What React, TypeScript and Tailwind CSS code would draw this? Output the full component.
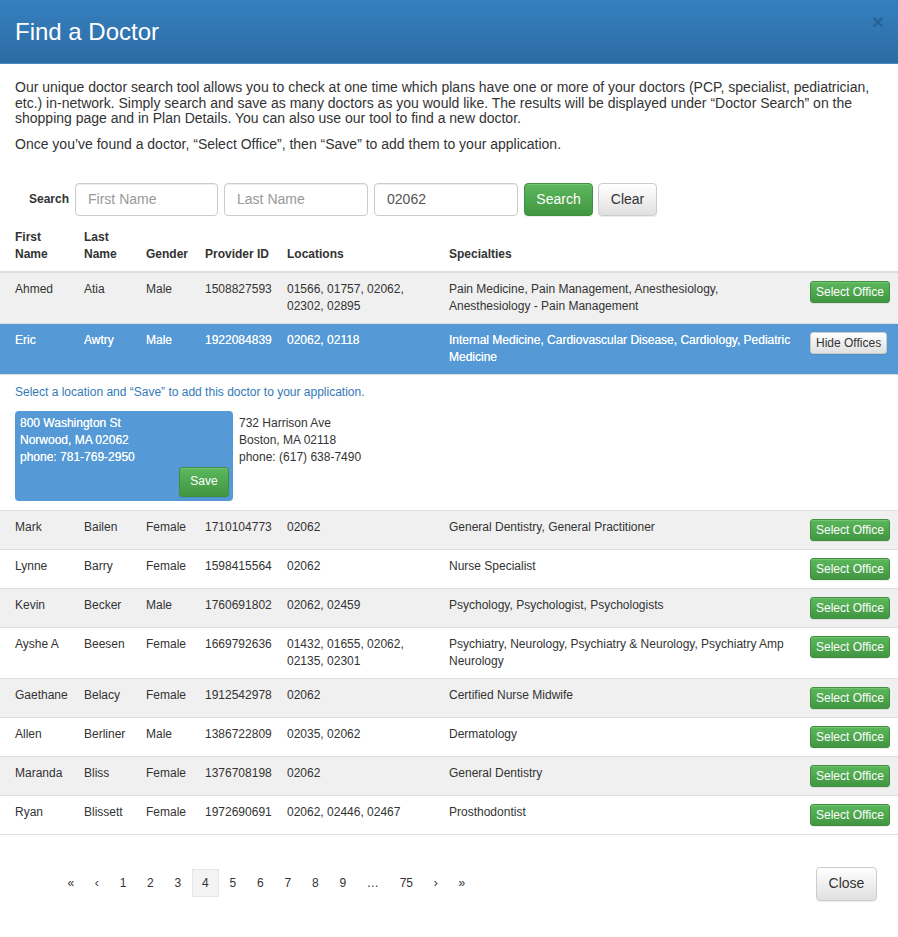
import React from "react";

type Doctor = {
  first: string;
  last: string;
  gender: string;
  id: string;
  locations: string;
  specialties: string;
  open?: boolean;
};

const doctors: Doctor[] = [
  { first: "Ahmed", last: "Atia", gender: "Male", id: "1508827593", locations: "01566, 01757, 02062, 02302, 02895", specialties: "Pain Medicine, Pain Management, Anesthesiology, Anesthesiology - Pain Management" },
  { first: "Eric", last: "Awtry", gender: "Male", id: "1922084839", locations: "02062, 02118", specialties: "Internal Medicine, Cardiovascular Disease, Cardiology, Pediatric Medicine", open: true },
  { first: "Mark", last: "Bailen", gender: "Female", id: "1710104773", locations: "02062", specialties: "General Dentistry, General Practitioner" },
  { first: "Lynne", last: "Barry", gender: "Female", id: "1598415564", locations: "02062", specialties: "Nurse Specialist" },
  { first: "Kevin", last: "Becker", gender: "Male", id: "1760691802", locations: "02062, 02459", specialties: "Psychology, Psychologist, Psychologists" },
  { first: "Ayshe A", last: "Beesen", gender: "Female", id: "1669792636", locations: "01432, 01655, 02062, 02135, 02301", specialties: "Psychiatry, Neurology, Psychiatry & Neurology, Psychiatry Amp Neurology" },
  { first: "Gaethane", last: "Belacy", gender: "Female", id: "1912542978", locations: "02062", specialties: "Certified Nurse Midwife" },
  { first: "Allen", last: "Berliner", gender: "Male", id: "1386722809", locations: "02035, 02062", specialties: "Dermatology" },
  { first: "Maranda", last: "Bliss", gender: "Female", id: "1376708198", locations: "02062", specialties: "General Dentistry" },
  { first: "Ryan", last: "Blissett", gender: "Female", id: "1972690691", locations: "02062, 02446, 02467", specialties: "Prosthodontist" },
];

const cols = "grid grid-cols-[76px_62px_59px_82px_162px_361px_96px]";
const greenBtn =
  "bg-gradient-to-b from-[#5cb85c] to-[#419641] border border-[#3e8f3e] text-white rounded-[3px] shadow-[inset_0_1px_0_rgba(255,255,255,0.15),0_1px_1px_rgba(0,0,0,0.075)]";
const whiteBtn =
  "bg-gradient-to-b from-white to-[#e0e0e0] border border-[#ccc] text-[#333] rounded-[3px] shadow-[inset_0_1px_0_rgba(255,255,255,0.15),0_1px_1px_rgba(0,0,0,0.075)]";
const inputCls =
  "h-[33px] border border-[#ccc] rounded-[4px] px-[12px] text-[14px] text-[#555] placeholder:text-[#999] shadow-[inset_0_1px_1px_rgba(0,0,0,0.075)] mr-[6px]";
// white text on blue looks heavier in the source; a faint glow gets close
const onBlue = "text-white [text-shadow:0_0_0.6px_rgba(255,255,255,0.9)]";

function Row({ d, striped }: { d: Doctor; striped: boolean }) {
  const bg = d.open ? `bg-[#559ad6] ${onBlue}` : striped ? "bg-[#f0f0f0] text-[#333]" : "bg-white text-[#333]";
  return (
    <div className={`${cols} ${bg} border-b border-[#ddd] text-[12px] leading-[17px]`}>
      <div className="pl-[15px] pr-2 py-2">{d.first}</div>
      <div className="px-2 py-2">{d.last}</div>
      <div className="px-2 py-2">{d.gender}</div>
      <div className="px-2 py-2">{d.id}</div>
      <div className="px-2 py-2">{d.locations}</div>
      <div className="px-2 py-2">{d.specialties}</div>
      <div className="px-2 py-2">
        {d.open ? (
          <button className={`${whiteBtn} [text-shadow:none] h-[22px] px-[5px] text-[12px] leading-[18px]`}>Hide Offices</button>
        ) : (
          <button className={`${greenBtn} h-[22px] px-[5px] text-[12px] leading-[18px]`}>Select Office</button>
        )}
      </div>
    </div>
  );
}

function Offices() {
  return (
    <div className="border-b border-[#ddd] pl-[15px] pt-[9px] pb-[9px] text-[12px] leading-[17px]">
      <div className="text-[#337ab7]">Select a location and “Save” to add this doctor to your application.</div>
      <div className="flex mt-[10px]">
        <div className={`w-[218px] h-[90px] bg-[#559ad6] rounded-[4px] ${onBlue} pt-[4px] pl-[5px] pr-[4px] pb-[4px] flex flex-col`}>
          <div>800 Washington St</div>
          <div>Norwood, MA 02062</div>
          <div>phone: 781-769-2950</div>
          <div className="mt-auto flex justify-end">
            <button className={`${greenBtn} [text-shadow:none] h-[30px] w-[50px] text-[12px]`}>Save</button>
          </div>
        </div>
        <div className="pl-[6px] pt-[4px] text-[#333]">
          <div>732 Harrison Ave</div>
          <div>Boston, MA 02118</div>
          <div>phone: (617) 638-7490</div>
        </div>
      </div>
    </div>
  );
}

export default function App() {
  const pages = ["«", "‹", "1", "2", "3", "4", "5", "6", "7", "8", "9", "…", "75", "›", "»"];
  return (
    <div className="w-[898px] h-[937px] bg-white overflow-hidden font-['Liberation_Sans',Arial,sans-serif] text-[#333]">
      {/* Header */}
      <div className="relative h-[64px] bg-gradient-to-b from-[#3580c0] to-[#2d6ca4] border-b border-[#4a8bc4] flex items-center px-[15px]">
        <h1 className="text-white text-[24px] leading-[26px]">Find a Doctor</h1>
        <span className="absolute right-[14px] top-[11px] text-[21px] font-bold leading-none text-black/20">×</span>
      </div>

      {/* Intro */}
      <div className="px-[15px] pt-[16px] text-[14px] leading-[15.5px]">
        <p>
          Our unique doctor search tool allows you to check at one time which plans have one or more of your doctors (PCP, specialist, pediatrician,
          etc.) in-network. Simply search and save as many doctors as you would like. The results will be displayed under “Doctor Search” on the
          shopping page and in Plan Details. You can also use our tool to find a new doctor.
        </p>
        <p className="mt-[10.5px]">Once you’ve found a doctor, “Select Office”, then “Save” to add them to your application.</p>
      </div>

      {/* Search */}
      <div className="flex items-center mt-[30px] pl-[29px]">
        <label className="text-[12px] font-bold mr-[6px]">Search</label>
        <input className={`${inputCls} w-[143px]`} placeholder="First Name" />
        <input className={`${inputCls} w-[144px]`} placeholder="Last Name" />
        <input className={`${inputCls} w-[144px]`} defaultValue="02062" />
        <button className={`${greenBtn} h-[33px] w-[69px] text-[14px] rounded-[4px] mr-[5px]`}>Search</button>
        <button className={`${whiteBtn} h-[33px] w-[59px] text-[14px] rounded-[4px]`}>Clear</button>
      </div>

      {/* Table */}
      <div className="mt-[13px]">
        <div className={`${cols} border-b-2 border-[#ddd] text-[12px] leading-[17px] font-bold`}>
          <div className="pl-[15px] pr-2 pb-2">First<br />Name</div>
          <div className="px-2 pb-2">Last<br />Name</div>
          <div className="px-2 pb-2 self-end">Gender</div>
          <div className="px-2 pb-2 self-end">Provider ID</div>
          <div className="px-2 pb-2 self-end">Locations</div>
          <div className="px-2 pb-2 self-end">Specialties</div>
          <div />
        </div>
        {doctors.map((d, i) => (
          <React.Fragment key={d.id}>
            <Row d={d} striped={i % 2 === 0} />
            {d.open && <Offices />}
          </React.Fragment>
        ))}
      </div>

      {/* Footer */}
      <div className="flex items-center justify-between mt-[31px] pl-[57px] pr-[21px]">
        <div className="flex items-center text-[12px] leading-[17px] text-[#333]">
          {pages.map((p, i) => (
            <span
              key={i}
              className={`h-[28px] flex items-center ${p === "4" ? "bg-[#f3f3f3] border border-[#e6e6e6] px-[9.4px]" : "px-[10.4px]"}`}
            >
              {p}
            </span>
          ))}
        </div>
        <button className={`${whiteBtn} h-[34px] w-[61px] text-[14px] rounded-[4px] mt-[1px]`}>Close</button>
      </div>
    </div>
  );
}
